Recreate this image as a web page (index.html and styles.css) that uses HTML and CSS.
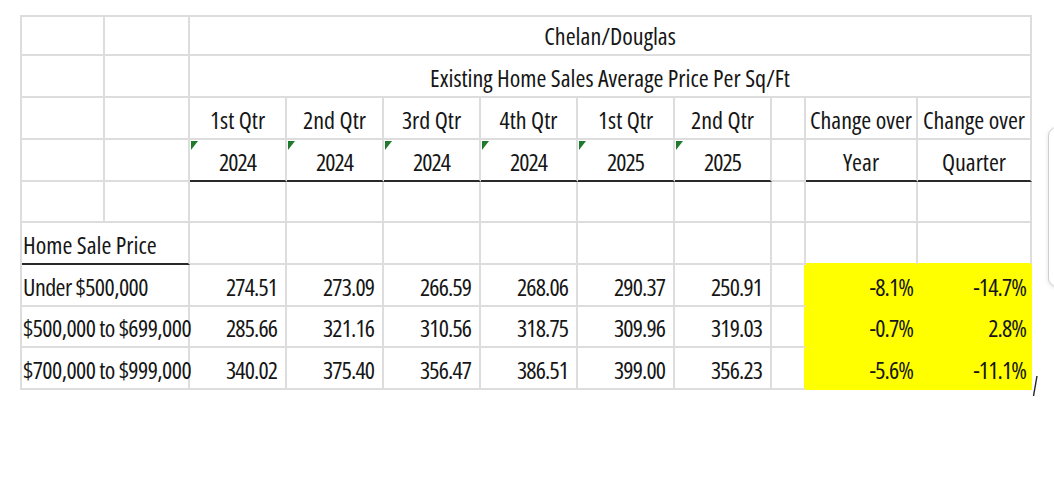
FILE: index.html
```html
<!DOCTYPE html>
<html>
<head>
<meta charset="utf-8">
<title>Chelan/Douglas</title>
<link rel="stylesheet" href="styles.css">
</head>
<body>
<div class="page">
  <div class="sheet">
    <!-- row 1 -->
    <div class="cell"></div>
    <div class="cell"></div>
    <div class="cell span-rest c">Chelan/Douglas</div>
    <!-- row 2 -->
    <div class="cell"></div>
    <div class="cell"></div>
    <div class="cell span-rest c">Existing Home Sales Average Price Per Sq/Ft</div>
    <!-- row 3 -->
    <div class="cell"></div>
    <div class="cell"></div>
    <div class="cell c">1st Qtr</div>
    <div class="cell c">2nd Qtr</div>
    <div class="cell c">3rd Qtr</div>
    <div class="cell c">4th Qtr</div>
    <div class="cell c">1st Qtr</div>
    <div class="cell c">2nd Qtr</div>
    <div class="cell"></div>
    <div class="cell c">Change over</div>
    <div class="cell c">Change over</div>
    <!-- row 4 -->
    <div class="cell"></div>
    <div class="cell"></div>
    <div class="cell c num thick flag">2024</div>
    <div class="cell c num thick flag">2024</div>
    <div class="cell c num thick flag">2024</div>
    <div class="cell c num thick flag">2024</div>
    <div class="cell c num thick flag">2025</div>
    <div class="cell c num thick flag">2025</div>
    <div class="cell"></div>
    <div class="cell c thick">Year</div>
    <div class="cell c thick">Quarter</div>
    <!-- row 5 -->
    <div class="cell"></div><div class="cell"></div><div class="cell"></div><div class="cell"></div>
    <div class="cell"></div><div class="cell"></div><div class="cell"></div><div class="cell"></div>
    <div class="cell"></div><div class="cell"></div><div class="cell"></div>
    <!-- row 6 -->
    <div class="cell span2 label thick">Home Sale Price</div>
    <div class="cell"></div><div class="cell"></div><div class="cell"></div>
    <div class="cell"></div><div class="cell"></div><div class="cell"></div>
    <div class="cell"></div>
    <div class="cell hl-top"></div>
    <div class="cell hl-top"></div>
    <!-- row 7 -->
    <div class="cell span2 label price">Under $500,000</div>
    <div class="cell r num">274.51</div>
    <div class="cell r num">273.09</div>
    <div class="cell r num">266.59</div>
    <div class="cell r num">268.06</div>
    <div class="cell r num">290.37</div>
    <div class="cell r num">250.91</div>
    <div class="cell gap"></div>
    <div class="cell hl p1 num">-8.1%</div>
    <div class="cell hl p2 num">-14.7%</div>
    <!-- row 8 -->
    <div class="cell span2 label price">$500,000 to $699,000</div>
    <div class="cell r num">285.66</div>
    <div class="cell r num">321.16</div>
    <div class="cell r num">310.56</div>
    <div class="cell r num">318.75</div>
    <div class="cell r num">309.96</div>
    <div class="cell r num">319.03</div>
    <div class="cell gap"></div>
    <div class="cell hl p1 num">-0.7%</div>
    <div class="cell hl p2 num">2.8%</div>
    <!-- row 9 -->
    <div class="cell span2 label price">$700,000 to $999,000</div>
    <div class="cell r num">340.02</div>
    <div class="cell r num">375.40</div>
    <div class="cell r num">356.47</div>
    <div class="cell r num">386.51</div>
    <div class="cell r num">399.00</div>
    <div class="cell r num">356.23</div>
    <div class="cell gap"></div>
    <div class="cell hl p1 num">-5.6%</div>
    <div class="cell hl p2 num">-11.1%</div>
  </div>
  <div class="side-card"></div>
  <svg class="stray" width="8" height="22" viewBox="0 0 8 22"><line x1="6" y1="1" x2="2.5" y2="21" stroke="#222" stroke-width="1.4"/></svg>
</div>
</body>
</html>
```
FILE: styles.css
```css
html, body {
  margin: 0;
  padding: 0;
  background: #ffffff;
  overflow: hidden;
}

.page {
  position: relative;
  width: 1054px;
  height: 500px;
  padding: 15px 0 0 20px;
  box-sizing: border-box;
}

.sheet {
  display: grid;
  grid-template-columns: 83px 85px 97px 97px 97px 97px 97px 97px 34px 112px 114px;
  grid-template-rows: 39px 42px 42px 42px 41px 42px 42px 41px 42px;
  width: 1012px;
  box-sizing: border-box;
  border-top: 2px solid #dddddd;
  border-left: 2px solid #dddddd;
  font-family: "Open Sans", "Liberation Sans", sans-serif;
  font-stretch: 75%;
  font-size: 24px;
  color: #161616;
}

.cell {
  position: relative;
  box-sizing: border-box;
  border-right: 2px solid #dddddd;
  border-bottom: 2px solid #dddddd;
  display: flex;
  align-items: flex-end;
  justify-content: flex-start;
  padding: 0 3px 4px 3px;
  line-height: 28px;
  white-space: nowrap;
  min-width: 0;
}

.span-rest { grid-column: 3 / -1; }
.span2 { grid-column: span 2; }

.label { padding-left: 1px; }
.price { letter-spacing: -0.55px; }
.num { letter-spacing: -0.9px; }

.c { justify-content: center; }
.r { justify-content: flex-end; padding-right: 8px; }
.p1 { justify-content: flex-end; padding-right: 3px; }
.p2 { justify-content: flex-end; padding-right: 4px; }

.thick { border-bottom-color: #2a2a2a; }

.flag::before {
  content: "";
  position: absolute;
  left: 1px;
  top: 1px;
  width: 0;
  height: 0;
  border-top: 9px solid #1f7a2e;
  border-right: 7px solid transparent;
}

.hl-top { border-bottom-color: #ffff00; }

.hl {
  background: #ffff00;
  border-right-color: #ffff00;
  border-bottom-color: #ffff00;
}

.gap { border-right-color: #ffff00; }

.side-card {
  position: absolute;
  left: 1048px;
  top: 127px;
  width: 40px;
  height: 160px;
  box-sizing: border-box;
  border: 1px solid #cfcfcf;
  border-radius: 9px;
  background: #ffffff;
  box-shadow: 0 1px 4px rgba(0, 0, 0, 0.12);
}

.stray {
  position: absolute;
  left: 1031px;
  top: 375px;
}
```
